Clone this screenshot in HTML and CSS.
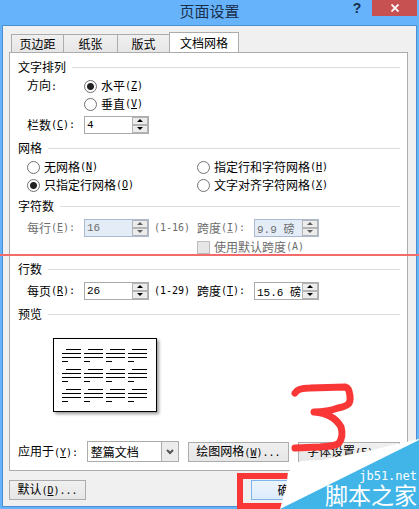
FILE: index.html
```
<!DOCTYPE html>
<html lang="zh-CN">
<head>
    <meta charset="UTF-8">
    <meta name="viewport" content="width=device-width, initial-scale=1.0">
    <title>页面设置</title>
    <link rel="stylesheet" href="styles.css">
</head>
<body>
    <div class="window">
        <header class="titlebar">
            <h1>页面设置</h1>
            <div class="window-buttons">
                <button type="button" class="help" aria-label="帮助">?</button>
                <button type="button" class="close" aria-label="关闭">
                    <svg width="8" height="8" viewBox="0 0 8 8"><path d="M0.5 0.5L7.5 7.5M7.5 0.5L0.5 7.5" stroke="#fff" stroke-width="1.8"/></svg>
                </button>
            </div>
        </header>

        <form class="dialog">
            <nav class="tabs">
                <button type="button" class="tab tab-short">页边距</button>
                <button type="button" class="tab">纸张</button>
                <button type="button" class="tab tab-short">版式</button>
                <button type="button" class="tab active">文档网格</button>
            </nav>

            <div class="panel">
                <section class="group">
                    <h2>文字排列</h2>
                    <div class="row row-radio">
                        <span class="name">方向<span class="key">:</span></span>
                        <label><input type="radio" name="direction" checked>水平<span class="key">(<u>Z</u>)</span></label>
                    </div>
                    <div class="row row-radio">
                        <span class="name"></span>
                        <label><input type="radio" name="direction">垂直<span class="key">(<u>V</u>)</span></label>
                    </div>
                    <div class="row row-field">
                        <label class="name" for="columns">栏数<span class="key">(<u>C</u>):</span></label>
                        <div class="spinner">
                            <input type="text" id="columns" value="4">
                            <div class="arrows">
                                <button type="button" class="up" aria-label="增加"></button>
                                <button type="button" class="down" aria-label="减少"></button>
                            </div>
                        </div>
                    </div>
                </section>

                <section class="group">
                    <h2>网格</h2>
                    <div class="row row-radio">
                        <label class="half"><input type="radio" name="grid">无网格<span class="key">(<u>N</u>)</span></label>
                        <label><input type="radio" name="grid">指定行和字符网格<span class="key">(<u>H</u>)</span></label>
                    </div>
                    <div class="row row-radio">
                        <label class="half"><input type="radio" name="grid" checked>只指定行网格<span class="key">(<u>O</u>)</span></label>
                        <label><input type="radio" name="grid">文字对齐字符网格<span class="key">(<u>X</u>)</span></label>
                    </div>
                </section>

                <section class="group disabled">
                    <h2>字符数</h2>
                    <div class="row row-field">
                        <label class="name" for="chars">每行<span class="key">(<u>E</u>):</span></label>
                        <div class="spinner">
                            <input type="text" id="chars" value="16" disabled>
                            <div class="arrows">
                                <button type="button" class="up" aria-label="增加" disabled></button>
                                <button type="button" class="down" aria-label="减少" disabled></button>
                            </div>
                        </div>
                        <span class="range key">(1-16)</span>
                        <label class="name" for="charPitch">跨度<span class="key">(<u>I</u>):</span></label>
                        <div class="spinner">
                            <input type="text" id="charPitch" value="9.9 磅" disabled>
                            <div class="arrows">
                                <button type="button" class="up" aria-label="增加" disabled></button>
                                <button type="button" class="down" aria-label="减少" disabled></button>
                            </div>
                        </div>
                    </div>
                    <div class="row row-check">
                        <span class="half"></span>
                        <label><input type="checkbox" disabled>使用默认跨度<span class="key">(A)</span></label>
                    </div>
                </section>

                <section class="group">
                    <h2>行数</h2>
                    <div class="row row-field">
                        <label class="name" for="lines">每页<span class="key">(<u>R</u>):</span></label>
                        <div class="spinner">
                            <input type="text" id="lines" value="26">
                            <div class="arrows">
                                <button type="button" class="up" aria-label="增加"></button>
                                <button type="button" class="down" aria-label="减少"></button>
                            </div>
                        </div>
                        <span class="range key">(1-29)</span>
                        <label class="name" for="linePitch">跨度<span class="key">(<u>T</u>):</span></label>
                        <div class="spinner">
                            <input type="text" id="linePitch" value="15.6 磅">
                            <div class="arrows">
                                <button type="button" class="up" aria-label="增加"></button>
                                <button type="button" class="down" aria-label="减少"></button>
                            </div>
                        </div>
                    </div>
                </section>

                <section class="group">
                    <h2>预览</h2>
                    <svg class="preview" width="104" height="74" viewBox="0 0 104 74">
                        <defs>
                            <path id="para" d="M4 0.5h15M0 4.5h19M0 8.5h19M0 12.5h6" stroke="#000"/>
                        </defs>
                        <rect x="0.5" y="0.5" width="103" height="73" fill="#fff" stroke="#000"/>
                        <use href="#para" x="9" y="11"/><use href="#para" x="31" y="11"/><use href="#para" x="53" y="11"/><use href="#para" x="75" y="11"/>
                        <use href="#para" x="9" y="31"/><use href="#para" x="31" y="31"/><use href="#para" x="53" y="31"/><use href="#para" x="75" y="31"/>
                        <use href="#para" x="9" y="51"/><use href="#para" x="31" y="51"/><use href="#para" x="53" y="51"/><use href="#para" x="75" y="51"/>
                    </svg>
                </section>

                <div class="apply">
                    <label for="applyTo">应用于<span class="key">(<u>Y</u>):</span></label>
                    <div class="select">
                        <select id="applyTo">
                            <option>整篇文档</option>
                            <option>插入点之后</option>
                        </select>
                        <svg width="8" height="6" viewBox="0 0 8 6"><path d="M1 1L4 4L7 1" fill="none" stroke="#555" stroke-width="2"/></svg>
                    </div>
                    <button type="button" class="btn">绘图网格<span class="key">(<u>W</u>)...</span></button>
                    <button type="button" class="btn">字体设置<span class="key">(<u>F</u>)...</span></button>
                </div>
            </div>

            <footer class="actions">
                <button type="button" class="btn default">默认<span class="key">(<u>D</u>)...</span></button>
                <button type="submit" class="btn ok">确定</button>
            </footer>
        </form>
    </div>

    <div class="red-line"></div>
    <svg class="marks" width="189" height="129" viewBox="230 380 189 129">
        <path d="M288 476H240V506H282" fill="none" stroke="#f93737" stroke-width="6"/>
        <path d="M280 509L286 488L288 472L300 461L322 460L372 450L419 439V509Z" fill="#fff"/>
        <path d="M280 509L419 440V509Z" fill="#42b5e8"/>
        <path d="M295 393C297 389 303 388 310 388L345 387C349 388 349 391 350 396C351 404 348 406 338 408C330 411 322 412 314 412C328 413 336 418 341 427C343 434 342 439 339 443C335 447 326 446 320 447L295 448" fill="none" stroke="#f93737" stroke-width="7" stroke-linecap="round" stroke-linejoin="round"/>
    </svg>
    <div class="watermark">
        <span class="site">jb51.net</span>
        <span class="brand">脚本之家</span>
    </div>
</body>
</html>
```
FILE: styles.css
```
* {
    box-sizing: border-box;
}

body {
    margin: 0;
    position: relative;
    overflow: hidden;
    font-family: "Noto Sans CJK SC", sans-serif;
    font-size: 12px;
    line-height: 18px;
    color: #000;
}

button,
input,
select {
    font-family: inherit;
    font-size: 12px;
    margin: 0;
    padding: 0;
    color: inherit;
}

.window {
    min-height: 100vh;
    display: flex;
    flex-direction: column;
    padding: 0 2px 2px;
    background-color: #66b3fb;
}

.titlebar {
    position: relative;
    height: 25px;
}

.titlebar h1 {
    margin: 0;
    text-align: center;
    font-size: 15px;
    font-weight: normal;
    line-height: 22px;
    color: #1a2f4a;
}

.window-buttons {
    position: absolute;
    top: 0;
    right: 0;
    display: flex;
    gap: 8px;
}

.help {
    width: 14px;
    height: 16px;
    border: none;
    background: none;
    font-family: "Liberation Sans", sans-serif;
    font-size: 14px;
    font-weight: bold;
    line-height: 16px;
    color: #16304f;
}

.close {
    width: 45px;
    height: 16px;
    border: none;
    background-color: #c75050;
    line-height: 0;
}

.dialog {
    flex: 1;
    display: flex;
    flex-direction: column;
    padding: 6px 8px 6px 6px;
    border: 1px solid #4a90d0;
    background-color: #f0f0f0;
}

.tabs {
    display: flex;
    align-items: flex-end;
    height: 20px;
    padding-left: 2px;
}

.tab {
    width: 54px;
    height: 18px;
    border: 1px solid #acacac;
    border-bottom: none;
    border-right: none;
    background: linear-gradient(#f0f0f0, #e6e6e6);
    line-height: 16px;
}

.tab-short {
    width: 52px;
}

.tab.active {
    width: 70px;
    height: 21px;
    margin-bottom: -1px;
    border-right: 1px solid #acacac;
    background: #fff;
}

.panel {
    flex: 1;
    display: flex;
    flex-direction: column;
    padding: 5px 7px 8px 8px;
    border: 1px solid #acacac;
    background-color: #fff;
}

.group {
    margin-bottom: 3px;
}

.group h2 {
    display: flex;
    align-items: center;
    gap: 6px;
    margin: 0 0 1px;
    font-size: 12px;
    font-weight: normal;
}

.group h2::after {
    content: "";
    flex: 1;
    height: 1px;
    background-color: #dcdcdc;
}

.row {
    display: flex;
    align-items: center;
    padding-left: 9px;
}

.row-radio {
    height: 18px;
}

.row-field {
    height: 23px;
}

.row-check {
    height: 16px;
    margin-bottom: 5px;
}

.disabled {
    margin-bottom: 0;
}

.row label {
    display: flex;
    align-items: center;
}

.name {
    width: 57px;
}

.half {
    width: 170px;
}

.range {
    width: 48px;
    padding-left: 5px;
}

.key {
    font-family: "DejaVu Sans Mono", monospace;
    font-size: 10px;
}

input[type="radio"],
input[type="checkbox"] {
    appearance: none;
    width: 13px;
    height: 13px;
    margin-right: 4px;
    border: 1px solid #707070;
    background-color: #fff;
}

input[type="radio"] {
    border-radius: 50%;
}

input[type="radio"]:checked {
    background: radial-gradient(circle, #222 3px, #fff 4px);
}

input[type="checkbox"]:disabled {
    border-color: #bcbcbc;
    background-color: #e6e6e6;
}

.spinner {
    display: flex;
    width: 65px;
    height: 18px;
    border: 1px solid #ababab;
    background-color: #fff;
}

.spinner input {
    flex: 1;
    min-width: 0;
    padding-left: 2px;
    border: none;
    background: none;
    font-family: "Liberation Mono", "Noto Sans CJK SC", monospace;
    font-size: 11px;
}

.arrows {
    display: flex;
    flex-direction: column;
    width: 16px;
}

.arrows button {
    flex: 1;
    display: flex;
    align-items: center;
    justify-content: center;
    border: 1px solid #b4b4b4;
    background-color: #ececec;
}

.arrows button::before {
    content: "";
    border: 3px solid transparent;
}

.arrows .up::before {
    border-top: none;
    border-bottom-color: #000;
}

.arrows .down::before {
    border-bottom: none;
    border-top-color: #000;
}

.disabled .row {
    color: #6d6d6d;
}

.disabled u {
    text-decoration-color: #a0a0a0;
}

.disabled .spinner {
    border-color: #a9b9d0;
    background-color: #e4ecf7;
}

.disabled .arrows button::before {
    opacity: 0.6;
}

.preview {
    display: block;
    margin: 15px 0 0 35px;
    box-shadow: 2px 2px 3px #999;
}

.apply {
    display: flex;
    align-items: center;
    margin-top: auto;
}

.apply label {
    width: 69px;
}

.select {
    display: flex;
    align-items: center;
    position: relative;
    width: 92px;
    height: 21px;
    margin-right: 9px;
}

.select select {
    appearance: none;
    width: 100%;
    height: 100%;
    padding-left: 3px;
    border: 1px solid #ababab;
    border-radius: 0;
    background: linear-gradient(to left, #ececec 16px, #ababab 16px, #ababab 17px, #fff 17px);
}

.select svg {
    position: absolute;
    right: 5px;
    pointer-events: none;
}

.btn {
    width: 102px;
    height: 20px;
    border: 1px solid #acacac;
    background: linear-gradient(#f0f0f0, #e6e6e6);
    line-height: 16px;
}

.apply .btn + .btn {
    margin-left: 9px;
}

.actions {
    display: flex;
    justify-content: space-between;
    padding: 9px 80px 0 0;
}

.actions .btn {
    width: 77px;
}

.actions .ok {
    border-color: #7eb4ea;
    background: linear-gradient(#ecf4fc, #dcecfc);
}

.red-line {
    position: absolute;
    top: 254px;
    left: 0;
    right: 0;
    height: 2px;
    background-color: #f26c6c;
}

.marks {
    position: absolute;
    right: 0;
    bottom: 0;
}

.watermark {
    position: absolute;
    right: 2px;
    bottom: 0;
    display: flex;
    flex-direction: column;
    align-items: flex-end;
    color: #fff;
}

.site {
    font-family: "DejaVu Sans Mono", monospace;
    font-size: 12px;
    line-height: 14px;
}

.brand {
    font-family: "Liberation Sans", "Noto Sans CJK SC", sans-serif;
    font-size: 23px;
    line-height: 26px;
}
```
